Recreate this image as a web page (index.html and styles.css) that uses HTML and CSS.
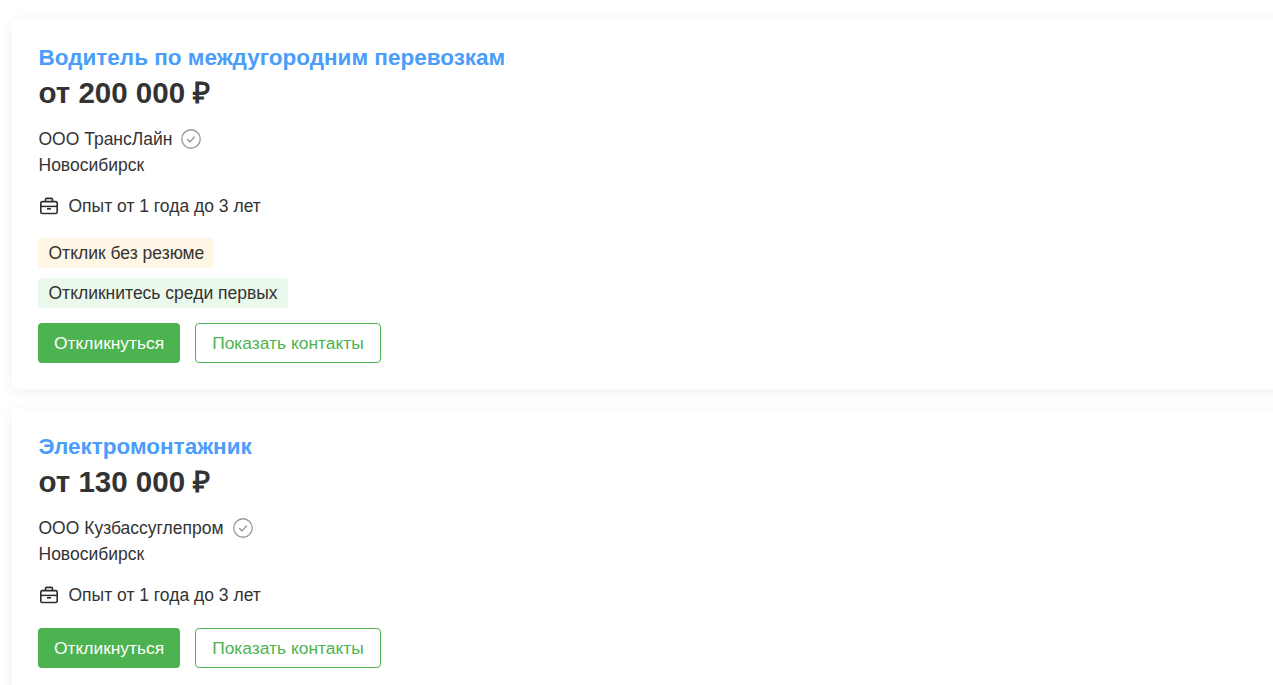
FILE: index.html
```html
<!DOCTYPE html>
<html lang="ru">
<head>
    <meta charset="UTF-8">
    <meta name="viewport" content="width=device-width, initial-scale=1.0">
    <title>Вакансии</title>
    <link rel="stylesheet" href="styles.css">
</head>
<body>
    <svg class="sprite" width="0" height="0">
        <symbol id="icon-check" viewBox="0 0 20 20">
            <circle cx="10" cy="10" r="9.25" fill="none" stroke="#9a9a9a" stroke-width="1.3"/>
            <path d="M6.3 10.3l2.6 2.5 4.9-5.2" fill="none" stroke="#8a8a8a" stroke-width="1.2"/>
        </symbol>
        <symbol id="icon-case" viewBox="0 0 20 18">
            <path d="M6.5 4.5V2.6c0-.7.5-1.2 1.2-1.2h4.6c.7 0 1.2.5 1.2 1.2v1.9" fill="none" stroke="#2d2d2d" stroke-width="1.6"/>
            <rect x="1.8" y="4.6" width="16.4" height="11.9" rx="1.6" fill="none" stroke="#2d2d2d" stroke-width="1.6"/>
            <path d="M2 9.4h16" fill="none" stroke="#2d2d2d" stroke-width="1.5"/>
            <path d="M8 11.8h4" fill="none" stroke="#2d2d2d" stroke-width="1.7"/>
        </symbol>
    </svg>

    <div class="list">
        <div class="card">
            <a class="title" href="#">Водитель по междугородним перевозкам</a>
            <div class="salary">от 200 000 ₽</div>
            <div class="company">
                <span>ООО ТрансЛайн</span>
                <svg class="check"><use href="#icon-check"/></svg>
            </div>
            <div class="city">Новосибирск</div>
            <div class="exp">
                <svg class="case"><use href="#icon-case"/></svg>
                <span>Опыт от 1 года до 3 лет</span>
            </div>
            <div class="tags">
                <span class="tag tag-yellow">Отклик без резюме</span>
                <span class="tag tag-green">Откликнитесь среди первых</span>
            </div>
            <div class="buttons">
                <button class="btn btn-main" type="button">Откликнуться</button>
                <button class="btn btn-outline" type="button">Показать контакты</button>
            </div>
        </div>

        <div class="card">
            <a class="title" href="#">Электромонтажник</a>
            <div class="salary">от 130 000 ₽</div>
            <div class="company">
                <span>ООО Кузбассуглепром</span>
                <svg class="check"><use href="#icon-check"/></svg>
            </div>
            <div class="city">Новосибирск</div>
            <div class="exp">
                <svg class="case"><use href="#icon-case"/></svg>
                <span>Опыт от 1 года до 3 лет</span>
            </div>
            <div class="buttons">
                <button class="btn btn-main" type="button">Откликнуться</button>
                <button class="btn btn-outline" type="button">Показать контакты</button>
            </div>
        </div>
    </div>
</body>
</html>
```

FILE: styles.css
```css
html, body {
    height: 100%;
    overflow: hidden;
}
body {
    margin: 0;
    background-color: #fff;
    color: #333;
    font-family: "Liberation Sans", Arial, sans-serif;
    font-size: 17.5px;
    line-height: 26px;
}
.sprite {
    position: absolute;
}
.list {
    display: flex;
    flex-direction: column;
    gap: 20px;
    width: 1300px;
    padding: 20px 0 0 12px;
}
.card {
    display: flex;
    flex-direction: column;
    align-items: flex-start;
    padding: 24px 26px 26px;
    background-color: #fff;
    border-radius: 4px;
    box-shadow: 0 2px 14px rgba(40, 60, 50, 0.07);
}
.title {
    color: #4a9dfa;
    font-size: 22.5px;
    font-weight: bold;
    line-height: 28px;
    text-decoration: none;
    margin-left: 0.5px;
}
.salary {
    font-size: 29.5px;
    font-weight: bold;
    line-height: 38px;
    margin: 2px 0 0 0.5px;
}
.company {
    display: flex;
    align-items: center;
    gap: 9px;
    margin: 14px 0 0 0.5px;
}
.check {
    width: 20px;
    height: 20px;
}
.city {
    margin-left: 0.5px;
}
.exp {
    display: flex;
    align-items: center;
    gap: 10px;
    margin: 15px 0 0 0.5px;
}
.case {
    width: 20px;
    height: 18px;
}
.tags {
    display: flex;
    flex-direction: column;
    align-items: flex-start;
    gap: 10px;
    margin-top: 19px;
}
.tag {
    padding: 2px 10px 2px 10.5px;
    border-radius: 4px;
}
.tag-yellow {
    background-color: #fff6e5;
}
.tag-green {
    background-color: #ebf8ec;
}
.buttons {
    display: flex;
    gap: 15px;
}
.tags + .buttons {
    margin-top: 15px;
}
.exp + .buttons {
    margin-top: 20px;
}
.btn {
    height: 40px;
    padding: 0 16px;
    border-radius: 4px;
    font-family: inherit;
    font-size: 17.4px;
    cursor: pointer;
}
.btn-main {
    background-color: #4cb350;
    border: none;
    color: #fff;
}
.btn-outline {
    background-color: #fff;
    border: 1px solid #4cb350;
    color: #4cb350;
}
```
